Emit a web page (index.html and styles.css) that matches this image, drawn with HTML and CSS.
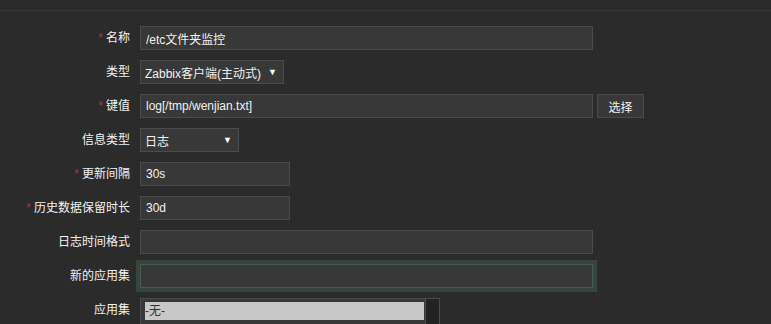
FILE: index.html
```html
<!DOCTYPE html>
<html lang="zh-CN">
<head>
    <meta charset="UTF-8">
    <title>监控项</title>
    <link rel="stylesheet" href="styles.css">
</head>
<body>
    <div class="top-bar"></div>

    <form class="item-form">
        <div class="form-row">
            <label class="form-label"><span class="req">*</span>名称</label>
            <div class="form-field"><input class="text-input wide" type="text" value="/etc文件夹监控"></div>
        </div>

        <div class="form-row">
            <label class="form-label">类型</label>
            <div class="form-field">
                <div class="select type-select"><span>Zabbix客户端(主动式)</span><span class="arrow">▼</span></div>
            </div>
        </div>

        <div class="form-row">
            <label class="form-label"><span class="req">*</span>键值</label>
            <div class="form-field">
                <input class="text-input wide" type="text" value="log[/tmp/wenjian.txt]">
                <button type="button" class="btn">选择</button>
            </div>
        </div>

        <div class="form-row">
            <label class="form-label">信息类型</label>
            <div class="form-field">
                <div class="select info-select"><span>日志</span><span class="arrow">▼</span></div>
            </div>
        </div>

        <div class="form-row">
            <label class="form-label"><span class="req">*</span>更新间隔</label>
            <div class="form-field"><input class="text-input short" type="text" value="30s"></div>
        </div>

        <div class="form-row">
            <label class="form-label"><span class="req">*</span>历史数据保留时长</label>
            <div class="form-field"><input class="text-input short" type="text" value="30d"></div>
        </div>

        <div class="form-row">
            <label class="form-label">日志时间格式</label>
            <div class="form-field"><input class="text-input wide" type="text" value=""></div>
        </div>

        <div class="form-row">
            <label class="form-label">新的应用集</label>
            <div class="form-field"><input class="text-input wide focused" type="text" value=""></div>
        </div>

        <div class="form-row">
            <label class="form-label">应用集</label>
            <div class="form-field">
                <div class="listbox">
                    <div class="options">
                        <div class="option selected">-无-</div>
                    </div>
                    <div class="scrollbar"></div>
                </div>
            </div>
        </div>
    </form>
</body>
</html>
```

FILE: styles.css
```css
* {
    margin: 0;
    padding: 0;
    box-sizing: border-box;
}

body {
    font-family: "Liberation Sans", "Noto Sans CJK SC", sans-serif;
    font-size: 12px;
    background: #2b2b2b;
    color: #f2f2f2;
    overflow: hidden;
}

.top-bar {
    height: 11px;
    background: #2a2a2a;
    border-bottom: 1px solid #383838;
}

.item-form {
    padding-top: 15px;
    display: flex;
    flex-direction: column;
    gap: 10px;
}

.form-row {
    display: flex;
    align-items: flex-start;
    gap: 10px;
}

.form-label {
    width: 130px;
    text-align: right;
    line-height: 24px;
    flex-shrink: 0;
    color: #f2f2f2;
}

.req {
    color: #a8344d;
    margin-right: 3px;
}

.form-field {
    display: flex;
    gap: 4px;
}

.text-input {
    height: 24px;
    background: #383838;
    border: 1px solid #4b4b4b;
    color: #f2f2f2;
    font-family: inherit;
    font-size: 12px;
    padding: 0 5px;
    outline: none;
}

.wide {
    width: 453px;
}

.short {
    width: 150px;
}

.text-input.focused {
    box-shadow: 0 0 0 4px #35463f;
    border-color: #4a5a52;
}

.select {
    height: 24px;
    background: #383838;
    border: 1px solid #4b4b4b;
    display: flex;
    align-items: center;
    justify-content: space-between;
    padding: 0 6px 0 4px;
}

.type-select {
    width: 144px;
}

.info-select {
    width: 99px;
}

.arrow {
    font-size: 9px;
    color: #ffffff;
}

.btn {
    height: 24px;
    width: 47px;
    background: #383838;
    border: 1px solid #4b4b4b;
    color: #f2f2f2;
    font-family: inherit;
    font-size: 12px;
}

.listbox {
    width: 300px;
    height: 40px;
    background: #383838;
    border: 1px solid #4b4b4b;
    display: flex;
    padding: 3px 0 0 4px;
}

.options {
    flex: 1;
}

.option {
    height: 18px;
    line-height: 18px;
    color: #333333;
}

.option.selected {
    background: #c8c8c8;
}

.scrollbar {
    width: 14px;
    margin-left: 1px;
    margin-top: -3px;
    background: #232323;
    border-left: 1px solid #4b4b4b;
}
```
